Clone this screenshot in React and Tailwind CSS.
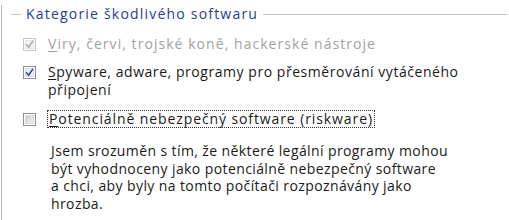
import React from 'react';

const CheckMark = ({ color }) => (
  <svg className="absolute left-[1px] top-[1px]" width="9" height="9" viewBox="0 0 9 9" fill="none">
    <path d="M1.5 4.8 L3.6 7.2 L7.6 1.4" stroke={color} strokeWidth="1.6" strokeLinecap="round" strokeLinejoin="round" />
  </svg>
);

const Box = ({ checked, disabled }) => {
  const outer = disabled ? 'border-[#c4c7cb]' : 'border-[#8f8f8f]';
  const inner = disabled
    ? 'border-[#e3e5e8] bg-[#f4f4f4]'
    : checked
      ? 'border-[#d6dbe3] bg-gradient-to-br from-[#e4e7ee] to-[#f9f9fb]'
      : 'border-[#d9dbde] bg-gradient-to-br from-[#c9ccd1] to-[#f3f3f4]';
  return (
    <span className={`relative block w-[13px] h-[13px] shrink-0 border ${outer} bg-white p-[1px]`}>
      <span className={`block w-full h-full border ${inner}`} />
      {checked && <CheckMark color={disabled ? '#a6a9ad' : '#2a4a9a'} />}
    </span>
  );
};

export default function App() {
  return (
    <div className="w-[509px] h-[220px] bg-white overflow-hidden" style={{ fontFamily: '"Open Sans", "Noto Sans", sans-serif' }}>
      <div className="ml-[1px] h-full border-l border-[#b4b9bd]">
        <div className="flex items-center h-[18px] mt-[5px]">
          <div className="ml-[9px] w-[10px] h-px bg-[#bcc6ca]" />
          <span className="px-[5px] text-[14px] leading-[18px] tracking-[1.2px] text-[#263d96]">Kategorie škodlivého softwaru</span>
          <div className="flex-1 mr-[2px] h-px bg-[#bcc6ca]" />
        </div>

        <div className="pl-[21px]">
          <div className="mt-[12px] flex items-start gap-[12px] text-[14px] leading-[18px] tracking-[1.05px] text-[#a2a2a2]">
            <span className="mt-[3px]"><Box checked disabled /></span>
            <span><span className="underline underline-offset-2">V</span>iry, červi, trojské koně, hackerské nástroje</span>
          </div>

          <div className="mt-[10px] flex items-start gap-[12px] text-[14px] leading-[18px] tracking-[0.55px] text-[#1a1a1a]">
            <span className="mt-[3px]"><Box checked /></span>
            <span><span className="underline underline-offset-2">S</span>pyware, adware, programy pro přesměrování vytáčeného<br />připojení</span>
          </div>

          <div className="mt-[11px] flex items-start gap-[11px] text-[14px] leading-[18px] tracking-[0.9px] text-[#1a1a1a]">
            <span className="mt-[3px]"><Box /></span>
            <span className="border border-dotted border-[#333] px-[1px] leading-[16px]"><span className="underline underline-offset-2">P</span>otenciálně nebezpečný software (riskware)</span>
          </div>

          <p className="mt-[14px] ml-[28px] text-[14px] leading-[17.7px] tracking-[0.4px] text-[#1a1a1a]">
            Jsem srozuměn s tím, že některé legální programy mohou<br />
            být vyhodnoceny jako potenciálně nebezpečný software<br />
            a chci, aby byly na tomto počítači rozpoznávány jako<br />
            hrozba.
          </p>
        </div>
      </div>
    </div>
  );
}
